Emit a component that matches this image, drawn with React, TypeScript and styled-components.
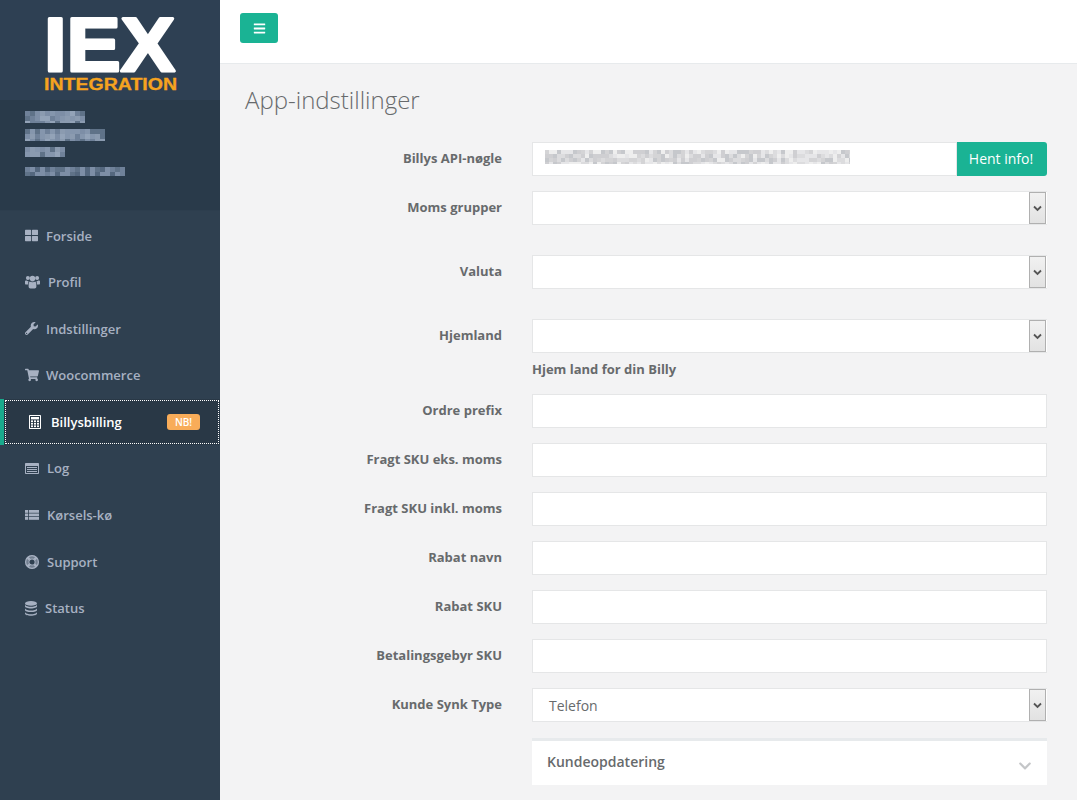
import React from "react";
import styled, { createGlobalStyle } from "styled-components";
import {
  FaThLarge,
  FaWrench,
  FaShoppingCart,
  FaBars,
  FaChevronDown,
} from "react-icons/fa";

const GlobalStyle = createGlobalStyle`
  html, body {
    margin: 0;
    padding: 0;
    height: 100%;
    overflow: hidden;
    background: #f3f3f4;
    font-family: "Open Sans", "Liberation Sans", sans-serif;
    font-size: 13px;
    color: #676a6c;
  }
  * { box-sizing: border-box; }
`;

type IconProps = { size?: number };

// these look like the old font-awesome 4 glyphs, the packaged ones are too different
const UsersIcon = (_: IconProps) => (
  <svg width="15" height="14" viewBox="0 0 15 14" fill="currentColor">
    <circle cx="2.9" cy="3" r="2" />
    <circle cx="12.1" cy="3" r="2" />
    <circle cx="7.5" cy="3.6" r="2.8" />
    <path d="M0 6.2 C0 5.5 .8 5.2 1.5 5.6 C2.2 6 3 6 3.6 6.4 C3.2 7.2 3 8.2 3.1 9.4 L.7 9.4 C.2 9.4 0 9 0 8.5 Z" />
    <path d="M15 6.2 C15 5.5 14.2 5.2 13.5 5.6 C12.8 6 12 6 11.4 6.4 C11.8 7.2 12 8.2 11.9 9.4 L14.3 9.4 C14.8 9.4 15 9 15 8.5 Z" />
    <path d="M4.6 6.6 C6 7.6 9 7.6 10.4 6.6 C11.2 7.2 11.4 9 11.4 11.6 C11.4 12.9 10.6 13.6 9.6 13.6 L5.4 13.6 C4.4 13.6 3.6 12.9 3.6 11.6 C3.6 9 3.8 7.2 4.6 6.6 Z" />
  </svg>
);

const CalculatorIcon = (_: IconProps) => (
  <svg width="12" height="14" viewBox="0 0 12 14" fill="currentColor">
    <path fillRule="evenodd" d="M1 0 H11 C11.6 0 12 .4 12 1 V13 C12 13.6 11.6 14 11 14 H1 C.4 14 0 13.6 0 13 V1 C0 .4 .4 0 1 0 Z M1 1 V13 H11 V1 Z" />
    <rect x="2" y="2" width="8" height="2.4" />
    {[5.4, 7.9, 10.4].map((y) =>
      [2, 5, 8].map((x) => <rect key={x + "-" + y} x={x} y={y} width="2" height="1.7" />)
    )}
  </svg>
);

const ListAltIcon = (_: IconProps) => (
  <svg width="14" height="11" viewBox="0 0 14 11" fill="currentColor">
    <path fillRule="evenodd" d="M1 0 H13 C13.6 0 14 .4 14 1 V10 C14 10.6 13.6 11 13 11 H1 C.4 11 0 10.6 0 10 V1 C0 .4 .4 0 1 0 Z M1 3 V10 H13 V3 Z" />
    <rect x="2" y="4" width="10" height="1" />
    <rect x="2" y="6" width="10" height="1" />
    <rect x="2" y="8" width="10" height="1" />
  </svg>
);

const ThListIcon = (_: IconProps) => (
  <svg width="14" height="10" viewBox="0 0 14 10" fill="currentColor">
    {[0, 3.5, 7].map((y) => (
      <g key={y}>
        <rect x="0" y={y} width="3" height="2.8" />
        <rect x="3.8" y={y} width="10.2" height="2.8" />
      </g>
    ))}
  </svg>
);

const LifeRingIcon = (_: IconProps) => (
  <svg width="14" height="14" viewBox="0 0 14 14">
    <circle cx="7" cy="7" r="5.3" fill="none" stroke="currentColor" strokeWidth="3" strokeOpacity=".55" />
    <circle cx="7" cy="7" r="6.4" fill="none" stroke="currentColor" strokeWidth="1.2" />
    <circle cx="7" cy="7" r="3.2" fill="none" stroke="currentColor" strokeWidth="1.2" />
    <path d="M2.6 2.6 L4.7 4.7 M11.4 2.6 L9.3 4.7 M2.6 11.4 L4.7 9.3 M11.4 11.4 L9.3 9.3" stroke="currentColor" strokeWidth="2.4" />
  </svg>
);

const DatabaseIcon = (_: IconProps) => (
  <svg width="12" height="15" viewBox="0 0 12 15" fill="currentColor">
    <ellipse cx="6" cy="2.4" rx="6" ry="2.4" />
    {[0, 3.7, 7.4].map((y) => (
      <path
        key={y}
        transform={`translate(0 ${y})`}
        d="M0 3.8 C1 5.2 3.4 5.8 6 5.8 C8.6 5.8 11 5.2 12 3.8 V5.2 C12 6.6 9.3 7.4 6 7.4 C2.7 7.4 0 6.6 0 5.2 Z"
      />
    ))}
  </svg>
);

const NAV_ITEMS = [
  { label: "Forside", Icon: FaThLarge, iconWidth: 13, gap: 8 },
  { label: "Profil", Icon: UsersIcon, iconWidth: 15, gap: 8 },
  { label: "Indstillinger", Icon: FaWrench, iconWidth: 13, gap: 8 },
  { label: "Woocommerce", Icon: FaShoppingCart, iconWidth: 14, gap: 7 },
  { label: "Billysbilling", Icon: CalculatorIcon, iconWidth: 12, gap: 10, active: true, badge: "NB!" },
  { label: "Log", Icon: ListAltIcon, iconWidth: 14, gap: 8 },
  { label: "Kørsels-kø", Icon: ThListIcon, iconWidth: 14, gap: 8 },
  { label: "Support", Icon: LifeRingIcon, iconWidth: 14, gap: 8 },
  { label: "Status", Icon: DatabaseIcon, iconWidth: 12, gap: 8 },
];

// the pixelated (censored) bits of the screenshot
function Mosaic({ width, height, cell, colors, seed }: { width: number; height: number; cell: number; colors: string[]; seed: number }) {
  const rects = [];
  let n = seed;
  for (let y = 0; y < height; y += cell) {
    for (let x = 0; x < width; x += cell) {
      n = (n * 9301 + 49297) % 233280;
      const color = colors[Math.floor((n / 233280) * colors.length)];
      rects.push(<rect key={x + "-" + y} x={x} y={y} width={cell} height={cell} fill={color} />);
    }
  }
  return (
    <svg width={width} height={height} style={{ display: "block" }}>
      {rects}
    </svg>
  );
}

const PROFILE_COLORS = ["#8b9bb0", "#7d8ea6", "#93a3b8", "#6f8199", "#8596ad", "#5f7288"];
const KEY_COLORS = ["#d4d4d6", "#dcdcde", "#cfcfd2", "#e6e6e8", "#c6c8cc", "#eeeeee"];

function App() {
  return (
    <Page>
      <GlobalStyle />
      <Sidebar>
        <LogoBlock>
          <svg width="180" height="100" viewBox="0 0 180 100" style={{ display: "block" }}>
            <text x="44" y="70.5" fontFamily="Liberation Sans" fontWeight="700" fontSize="76" fill="#fff" stroke="#fff" strokeWidth="3" strokeLinejoin="round" textLength="131" lengthAdjust="spacingAndGlyphs">
              IEX
            </text>
            <text x="44" y="90" fontFamily="Liberation Sans" fontWeight="700" fontSize="16" fill="#f5a31f" stroke="#f5a31f" strokeWidth="0.3" textLength="133" lengthAdjust="spacingAndGlyphs">
              INTEGRATION
            </text>
          </svg>
        </LogoBlock>
        <ProfileBlock>
          <Blurred $top={0}>
            <Mosaic width={60} height={12} cell={5} colors={PROFILE_COLORS} seed={11} />
          </Blurred>
          <Blurred $top={6}>
            <Mosaic width={80} height={12} cell={5} colors={PROFILE_COLORS} seed={42} />
          </Blurred>
          <Blurred $top={6}>
            <Mosaic width={40} height={10} cell={5} colors={PROFILE_COLORS} seed={77} />
          </Blurred>
          <Blurred $top={10}>
            <Mosaic width={100} height={9} cell={5} colors={["#5f7288", "#6f8199", "#54677e", "#7d8ea6"]} seed={5} />
          </Blurred>
        </ProfileBlock>
        <Nav>
          {NAV_ITEMS.map(({ label, Icon, iconWidth, gap, active, badge }) => (
            <NavItem key={label} $active={active}>
              <NavLink $active={active}>
                <NavIcon $width={iconWidth} $gap={gap}>
                  <Icon size={iconWidth} />
                </NavIcon>
                {label}
                {badge && <Badge>{badge}</Badge>}
              </NavLink>
            </NavItem>
          ))}
        </Nav>
      </Sidebar>
      <Main>
        <TopBar>
          <MenuButton>
            <FaBars size={13} />
          </MenuButton>
        </TopBar>
        <Content>
          <Title>App-indstillinger</Title>
          <Form>
            <Row>
              <Label>Billys API-nøgle</Label>
              <InputGroup>
                <Input $pad={7}>
                  <Blurred $top={0}>
                    <Mosaic width={305} height={14} cell={4} colors={KEY_COLORS} seed={23} />
                  </Blurred>
                </Input>
                <AddonButton>Hent info!</AddonButton>
              </InputGroup>
            </Row>
            <Row $gap={30}>
              <Label>Moms grupper</Label>
              <SelectField />
            </Row>
            <Row $gap={30}>
              <Label>Valuta</Label>
              <SelectField />
            </Row>
            <Row $gap={16}>
              <Label>Hjemland</Label>
              <div>
                <SelectField />
                <HelpText>Hjem land for din Billy</HelpText>
              </div>
            </Row>
            <Row>
              <Label>Ordre prefix</Label>
              <Input />
            </Row>
            <Row>
              <Label>Fragt SKU eks. moms</Label>
              <Input />
            </Row>
            <Row>
              <Label>Fragt SKU inkl. moms</Label>
              <Input />
            </Row>
            <Row>
              <Label>Rabat navn</Label>
              <Input />
            </Row>
            <Row>
              <Label>Rabat SKU</Label>
              <Input />
            </Row>
            <Row>
              <Label>Betalingsgebyr SKU</Label>
              <Input />
            </Row>
            <Row $gap={16}>
              <Label>Kunde Synk Type</Label>
              <SelectField value="Telefon" />
            </Row>
            <Row>
              <span />
              <Panel>
                <PanelTitle>Kundeopdatering</PanelTitle>
                <PanelChevron>
                  <FaChevronDown size={14} />
                </PanelChevron>
              </Panel>
            </Row>
          </Form>
        </Content>
      </Main>
    </Page>
  );
}

function SelectField({ value }: { value?: string }) {
  return (
    <SelectBox>
      <SelectValue>{value}</SelectValue>
      <SelectArrow>
        <svg width="9" height="7" viewBox="0 0 9 7">
          <path d="M1 1.5 L4.5 5 L8 1.5" fill="none" stroke="#555" strokeWidth="1.8" />
        </svg>
      </SelectArrow>
    </SelectBox>
  );
}

// css styles
const Page = styled.div`
  display: flex;
  width: 100%;
  height: 100vh;
  overflow: hidden;
`;

const Sidebar = styled.aside`
  width: 220px;
  flex-shrink: 0;
  background: #2f4050;
`;

const LogoBlock = styled.div`
  height: 100px;
  background: #2e4053;
`;

const ProfileBlock = styled.div`
  height: 111px;
  padding: 11px 0 0 25px;
  background: #293a4a;
  border-bottom: 1px solid #2d3e4e;
`;

const Blurred = styled.div<{ $top: number }>`
  margin-top: ${(p) => p.$top}px;
  filter: blur(0.7px);
`;

const Nav = styled.nav`
  padding-top: 1.22px;
`;

const NavItem = styled.div<{ $active?: boolean }>`
  height: 46.58px;
  background: ${(p) => (p.$active ? "#293846" : "transparent")};
  border-left: ${(p) => (p.$active ? "4px solid #19aa8d" : "0")};
`;

const NavLink = styled.div<{ $active?: boolean }>`
  height: 100%;
  display: flex;
  align-items: center;
  padding-left: 25px;
  font-size: 13px;
  font-weight: 600;
  color: ${(p) => (p.$active ? "#ffffff" : "#a7b1c2")};
  outline: ${(p) => (p.$active ? "1px dotted #ffffff" : "0")};
  outline-offset: -2px;
`;

const NavIcon = styled.span<{ $width: number; $gap: number }>`
  display: inline-flex;
  width: ${(p) => p.$width}px;
  margin-right: ${(p) => p.$gap}px;
`;

const Badge = styled.span`
  margin-left: auto;
  margin-right: 20px;
  width: 33px;
  height: 16px;
  line-height: 16px;
  text-align: center;
  border-radius: 3px;
  background: #f8ac59;
  color: #fff;
  font-size: 10px;
  font-weight: 600;
`;

const Main = styled.main`
  flex: 1;
  min-width: 0;
  background: #f3f3f4;
`;

const TopBar = styled.header`
  height: 64px;
  padding: 13px 20px;
  background: #fff;
  border-bottom: 1px solid #e7eaec;
`;

const MenuButton = styled.button`
  display: flex;
  align-items: center;
  justify-content: center;
  width: 38px;
  height: 30px;
  padding: 0;
  border: 0;
  border-radius: 3px;
  background: #1ab394;
  color: #fff;
`;

const Content = styled.section`
  padding: 0 30px 0 25px;
`;

const Title = styled.h2`
  margin: 0;
  padding-top: 19px;
  height: 78px;
  font-size: 24px;
  line-height: 33px;
  font-weight: 300;
  color: #676a6c;
`;

const Form = styled.form`
  display: block;
`;

const Row = styled.div<{ $gap?: number }>`
  display: grid;
  grid-template-columns: 257px 515px;
  column-gap: 30px;
  margin-bottom: ${(p) => p.$gap ?? 15}px;
`;

const Label = styled.label`
  padding-top: 7px;
  line-height: 18px;
  font-size: 13px;
  font-weight: 700;
  text-align: right;
  color: #676a6c;
`;

const Input = styled.div<{ $pad?: number }>`
  flex: 1;
  height: 34px;
  padding: ${(p) => p.$pad ?? 6}px 12px;
  background: #fff;
  border: 1px solid #e5e6e7;
`;

const InputGroup = styled.div`
  display: flex;
`;

const AddonButton = styled.button`
  width: 90px;
  height: 34px;
  padding: 0 2px 2px 0;
  border: 0;
  border-radius: 0 3px 3px 0;
  background: #1ab394;
  color: #fff;
  font-family: inherit;
  font-size: 14px;
`;

const SelectBox = styled.div`
  display: flex;
  align-items: stretch;
  height: 34px;
  padding-right: 1px;
  background: #fff;
  border: 1px solid #e5e6e7;
  border-right-width: 0;
`;

const SelectValue = styled.span`
  flex: 1;
  padding-left: 16px;
  line-height: 34px;
  font-size: 14px;
  color: #676a6c;
`;

const SelectArrow = styled.span`
  display: flex;
  align-items: center;
  justify-content: center;
  width: 17px;
  background: linear-gradient(#f1f1f1, #e2e2e2);
  border: 1px solid #b0b0b0;
`;

const HelpText = styled.div`
  margin-top: 7px;
  line-height: 18px;
  font-size: 13px;
  font-weight: 700;
  color: #676a6c;
`;

const Panel = styled.div`
  display: flex;
  align-items: center;
  justify-content: space-between;
  height: 47px;
  padding: 0 15px 4px;
  background: #fff;
  border-top: 3px solid #e7eaec;
`;

const PanelTitle = styled.h5`
  margin: 0;
  font-size: 14px;
  font-weight: 600;
  color: #676a6c;
`;

const PanelChevron = styled.span`
  display: flex;
  padding-top: 10px;
  color: #c4c6c8;
`;

export default App;
